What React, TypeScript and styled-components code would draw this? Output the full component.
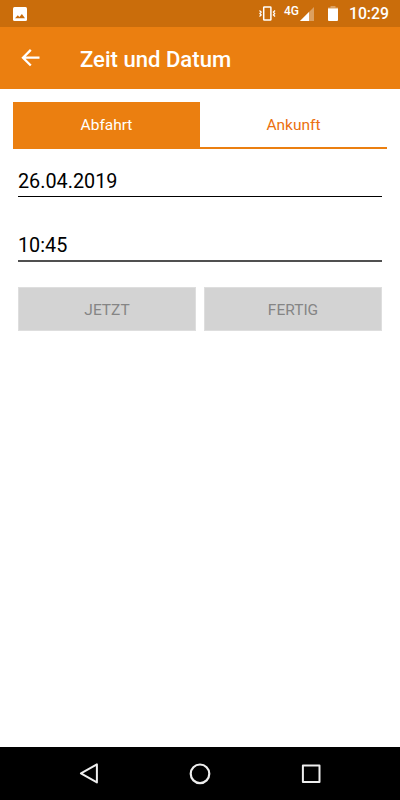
import React from "react";
import styled, { createGlobalStyle } from "styled-components";

const GlobalStyle = createGlobalStyle`
  * { box-sizing: border-box; }
  html, body { margin: 0; padding: 0; background: #fff; }
  body { font-family: Roboto, "Liberation Sans", sans-serif; }
  button { font-family: inherit; margin: 0; padding: 0; border: 0; background: none; }
  svg { display: block; flex: none; }
`;

const Screen = styled.div`
  display: flex;
  flex-direction: column;
  width: 400px;
  height: 800px;
  background: #fff;
  overflow: hidden;
`;

const StatusBar = styled.div`
  display: flex;
  align-items: center;
  justify-content: space-between;
  height: 27px;
  padding: 0 11px 0 13px;
  background: #ca6d0b;
  color: #fff;
`;

const StatusGroup = styled.div`
  display: flex;
  align-items: center;
`;

const Network = styled.span`
  width: 15px;
  margin: -6px 1px 0 8px;
  font-size: 12px;
  font-weight: 500;
  line-height: 14px;
  white-space: nowrap;
`;

const BatteryIcon = styled.svg`
  margin-left: 14px;
`;

const Clock = styled.span`
  margin-left: 11px;
  font-size: 15.8px;
  font-weight: 500;
  line-height: 27px;
`;

const Header = styled.header`
  display: flex;
  align-items: center;
  height: 62px;
  padding-left: 21px;
  background: #eb7f10;
  color: #fff;
`;

const Title = styled.h1`
  margin: 2px 0 0 40px;
  font-size: 22.1px;
  font-weight: 500;
  line-height: 28px;
`;

const Content = styled.main`
  flex: 1;
  padding: 13px 13px 0;
`;

const Tabs = styled.div`
  display: grid;
  grid-template-columns: 187px 187px;
  height: 47px;
`;

const Tab = styled.button<{ $active?: boolean }>`
  padding-bottom: ${(p) => (p.$active ? 2 : 0)}px;
  border-bottom: ${(p) => (p.$active ? "0" : "2px solid #eb7f10")};
  background: ${(p) => (p.$active ? "#eb7f10" : "#fff")};
  color: ${(p) => (p.$active ? "#fff" : "#eb6f10")};
  font-size: 15.5px;
`;

const Form = styled.div`
  padding: 0 5px;
`;

const Field = styled.div<{ $height: number; $focused?: boolean }>`
  display: flex;
  align-items: flex-end;
  height: ${(p) => p.$height}px;
  padding-bottom: 2px;
  border-bottom: ${(p) => (p.$focused ? "2px solid #505050" : "1px solid #000")};
  color: #000;
  font-size: 19.8px;
  line-height: 24px;
`;

const Actions = styled.div`
  display: grid;
  grid-template-columns: 178px 178px;
  column-gap: 8px;
  margin-top: 25px;
`;

const ActionButton = styled.button`
  height: 44px;
  padding-top: 1px;
  border: 1px solid #dedede;
  background: #d3d3d3;
  color: #858585;
  font-size: 15.5px;
`;

const NavBar = styled.nav`
  display: flex;
  align-items: center;
  justify-content: space-between;
  height: 53px;
  padding: 0 78px;
  background: #000;
`;

export default function App() {
  return (
    <>
      <GlobalStyle />
      <Screen>
        <StatusBar>
          <svg width="14" height="14" viewBox="0 0 14 14">
            <rect width="14" height="14" rx="1.5" fill="#fff" />
            <path d="M2 11.2 4.8 8.2l1.6 1.9L8.9 7l3.1 4.2z" fill="#ca6d0b" />
          </svg>
          <StatusGroup>
            <svg width="17" height="15" viewBox="0 0 17 15" fill="none" stroke="#fff" strokeWidth="1.2">
              <rect x="4.7" y="1" width="7.2" height="13" rx="0.6" strokeWidth="1.5" />
              <path d="M.5 4.5 2.2 6 .9 7.5l1.3 1.5L.5 10.5M16.1 4.5 14.4 6l1.3 1.5L14.4 9l1.7 1.5" />
            </svg>
            <Network>4G</Network>
            <svg width="14" height="14" viewBox="0 0 14 14">
              <path d="M0 14 14 0v14z" fill="#fff" fillOpacity="0.35" />
              <path d="M0 14 9 5v9z" fill="#fff" />
            </svg>
            <BatteryIcon width="10" height="15" viewBox="0 0 10 15">
              <path d="M2.5 0h5v1.5H10V3H0V1.5h2.5z" fill="#fff" fillOpacity="0.35" />
              <path d="M0 2.5h10V14q0 1-1 1H1q-1 0-1-1z" fill="#fff" />
            </BatteryIcon>
            <Clock>10:29</Clock>
          </StatusGroup>
        </StatusBar>
        <Header>
          <svg width="19" height="18" viewBox="0 0 19 18" fill="none" stroke="#fff" strokeWidth="2.3">
            <path d="M18.5 8.7H2M9.8.9 2 8.7l7.8 7.8" />
          </svg>
          <Title>Zeit und Datum</Title>
        </Header>
        <Content>
          <Tabs>
            <Tab $active>Abfahrt</Tab>
            <Tab>Ankunft</Tab>
          </Tabs>
          <Form>
            <Field $height={48}>26.04.2019</Field>
            <Field $height={65} $focused>10:45</Field>
            <Actions>
              <ActionButton>JETZT</ActionButton>
              <ActionButton>FERTIG</ActionButton>
            </Actions>
          </Form>
        </Content>
        <NavBar>
          <svg width="22" height="22" viewBox="0 0 22 22" fill="none" stroke="#eee" strokeWidth="2" strokeLinejoin="round">
            <path d="M18.9 1.4v18L2.9 10.4z" />
          </svg>
          <svg width="22" height="22" viewBox="0 0 22 22" fill="none" stroke="#eee" strokeWidth="2.2">
            <circle cx="11" cy="10.8" r="9.3" />
          </svg>
          <svg width="22" height="22" viewBox="0 0 22 22" fill="none" stroke="#eee" strokeWidth="2" strokeLinejoin="round">
            <rect x="2.9" y="2.4" width="16.6" height="16.6" />
          </svg>
        </NavBar>
      </Screen>
    </>
  );
}
